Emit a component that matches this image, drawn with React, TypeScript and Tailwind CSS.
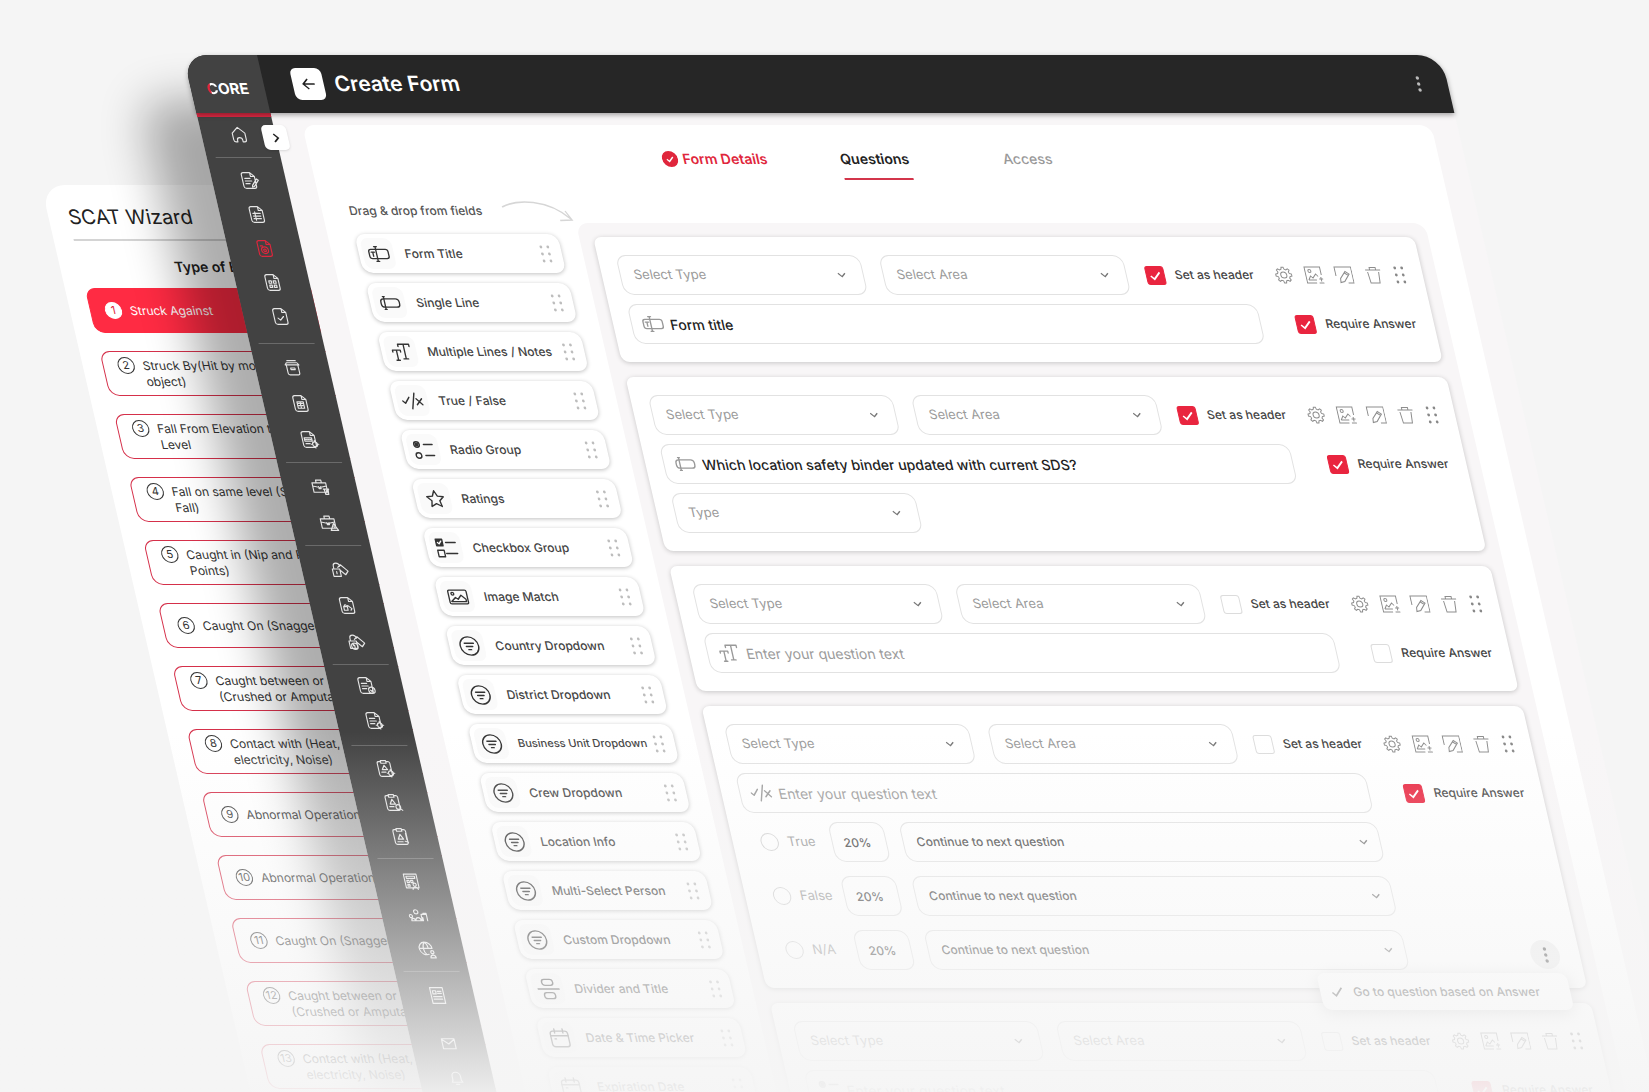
import { useState, type ReactNode } from "react"
import clsx from "clsx"

/* ---------- sidebar icons, 20x20 grid ---------- */

const DOC = "M5.5 2.5h6.3l3.7 3.7v9.3a2 2 0 0 1-2 2h-8a2 2 0 0 1-2-2v-11a2 2 0 0 1 2-2zM11.8 2.5v3.7h3.7"
const CLIP = "M7 3.5H5A1.5 1.5 0 0 0 3.5 5v11A1.5 1.5 0 0 0 5 17.5h9a1.5 1.5 0 0 0 1.5-1.5V5A1.5 1.5 0 0 0 14 3.5h-2M7 2.5h5V5H7z"
const CASE = "M3 6.5h13v9H3zM7 6.5V4h5v2.5M3 9.500l6.5 1.5 6.5-1.5M8.5 10v2h2v-2"
const LOCKTAG = "M3.5 9.5h7v7h-7zM5 9.5V7a3 3 0 0 1 6 0M9 8l3-2.5 6 6-3 3.500-4.500-4.500M7 12v2"
const BADGE = "M14.5 12.2a2.3 2.3 0 1 0 0 4.6 2.3 2.3 0 0 0 0-4.6zM14.5 11v1.2M14.5 16.8V18M11 14.5h1.2M16.8 14.5H18"
const LINES = "M6 8h5M6 10.5h6M6 13h4"

type NavGroup = { cell: string; pad: string; icons: { label: string; d: string; active?: boolean }[] }

const NAV_GROUPS: NavGroup[] = [
  {
    cell: "h-[34px]",
    pad: "pt-[5px] pb-[10px]",
    icons: [
      { label: "Edit form", d: DOC + LINES + "M12 14.5l5-6 1.5 1.2-5 6-2 .5z" },
      { label: "Form list", d: DOC + "M6 9h1M8.5 9H13M6 11.5h1M8.5 11.5H13M6 14h1M8.5 14H13M8 7.5v8" },
      { label: "Form builder", active: true, d: DOC + "M9.5 8.5a3.2 3.2 0 1 0 0 6.4 3.2 3.2 0 0 0 0-6.4zM9.5 10.5a1.2 1.2 0 1 0 0 2.4 1.2 1.2 0 0 0 0-2.4zM6 7.5h2" },
      { label: "Templates", d: DOC + "M6.3 8.5h2.4v2.2H6.3zM10.5 8.5h2.4v2.2h-2.4zM6.3 12.5h2.4v2.2H6.3zM10.5 12.5h2.4v2.2h-2.4z" },
      { label: "Completed", d: DOC + "M7 11.5l2 2 3.5-3.5" },
    ],
  },
  {
    cell: "h-9",
    pad: "py-[5px]",
    icons: [
      { label: "Archive", d: "M3.5 7.5h13M4.5 7.5v8A1.5 1.5 0 0 0 6 17h8a1.5 1.5 0 0 0 1.5-1.5v-8M5 5.5h10M6 3.5h8M3.5 7.5L5 5.5M16.5 7.5L15 5.5M8 10.5h4V12H8z" },
      { label: "Reports", d: DOC + "M6.5 8.5h6v6h-6zM9.5 8.5v6M7.5 10h1M7.5 12h1M10.5 10h1M10.5 12h1" },
      { label: "Report settings", d: DOC + "M5.5 8.5h7v3h-7zM6.5 10h1M8.5 10h1M10.5 10h1M6 14h4" + BADGE },
    ],
  },
  {
    cell: "h-9",
    pad: "py-[5px]",
    icons: [
      { label: "Removed jobs", d: CASE + "M12.5 12.5h5M13.2 12.5l.5 5h2.8l.5-5M15 14v2" },
      { label: "Job hazards", d: CASE + "M14.5 11l3.5 6.5h-7zM14.5 13.5v2" },
    ],
  },
  {
    cell: "h-9",
    pad: "py-[5px]",
    icons: [
      { label: "Lockout", d: LOCKTAG },
      { label: "Lockout forms", d: DOC + "M6 11h3.5v3.5H6zM6.8 11v-1a1.2 1.2 0 0 1 2 0M10 10l3.5 3-1.2 1.5" },
      { label: "Lockout settings", d: LOCKTAG + "M8 11.5a3 3 0 1 0 0 6 3 3 0 0 0 0-6zM8 13.5v2" },
    ],
  },
  {
    cell: "h-[35px]",
    pad: "pt-[3px] pb-[7px]",
    icons: [
      { label: "Approved", d: DOC + LINES + "M14.5 11.5a3 3 0 1 0 0 6 3 3 0 0 0 0-6zM13.3 14.5l1 1 1.5-1.8" },
      { label: "Policy settings", d: DOC + LINES + BADGE },
    ],
  },
  {
    cell: "h-[34px]",
    pad: "py-[5px]",
    icons: [
      { label: "Incident settings", d: CLIP + "M9.5 7l2.5 4H7zM6 13.5h4" + BADGE },
      { label: "Incident search", d: CLIP + "M9.5 7l2.5 4.5H7zM6 14h4M14 12a2.2 2.2 0 1 0 0 4.4 2.2 2.2 0 0 0 0-4.4zM15.8 15.8l1.7 1.7" },
      { label: "Incident edit", d: CLIP + "M9.5 8l2.5 4.5H7zM6 15h5M15 7v6M13 14.5l3 1" },
    ],
  },
  {
    cell: "h-[34px]",
    pad: "py-[5px]",
    icons: [
      { label: "Schedule", d: "M4 3h12v13H4zM6 5h8v2H6zM6 9h2v2H6zM9.5 9h2v2h-2zM6 13h2v1.5H6zM12.5 11.5a1.5 1.5 0 1 0 0 3 1.5 1.5 0 0 0 0-3zM10 17.5c.5-3 4.5-3 5 0" },
      { label: "Teams", d: "M7.5 4.5a2 2 0 1 0 0 4 2 2 0 0 0 0-4zM3.5 10.5a1.5 1.5 0 1 0 0 .1M2 15c0-3 3.5-3 3.5 0zM6 15c0-4 5-4 5 0zM12 15V9h5v6M14 8h3v3M13 15v-3" },
      { label: "Global users", d: "M9 3a6 6 0 1 0 2 11.6M3 9h12M9 3c-3 3-3 9 0 12M9 3c2 2 2.5 4 2.5 6M15 9a6 6 0 0 0-6-6M14.5 11a1.5 1.5 0 1 0 0 3 1.5 1.5 0 0 0 0-3zM12 18c.3-3.5 4.7-3.5 5 0z" },
    ],
  },
]

const HOME = "M4 8.7 10 3.2l6 5.5V15a2 2 0 0 1-2 2h-1.5v-1.5a2.5 2.5 0 0 0-5 0V17H6a2 2 0 0 1-2-2z"
const NEWS = "M4 2.5h12v15H4zM6 5.5h3v3H6zM10.5 6H14M10.5 8H14M6 11h8M6 13.5h8"
const MAIL = "M4 5.5h12V15H4zM4 6l6 4.5L16 6"
const BELL = "M5 14.5h10l-1-2V9a4 4 0 0 0-8 0v3.5zM8.5 16.5h3"

function NavIcon({ d, label, active, cell }: { d: string; label: string; active?: boolean; cell: string }) {
  return (
    <a href="#" aria-label={label} className={clsx("flex items-center justify-center", cell, active ? "text-[#e0263c]" : "text-[#e6e6e6]")}>
      <svg viewBox="0 0 20 20" className="size-[21px]" fill="none" stroke="currentColor" strokeWidth="1.1" strokeLinejoin="round" strokeLinecap="round">
        <path d={d} />
      </svg>
    </a>
  )
}

/* ---------- field icons, 24x24 grid ---------- */

const FIELD_ICONS: Record<string, ReactNode> = {
  title: (
    <>
      <rect x="1.5" y="7" width="21" height="10" rx="2.5" />
      <path d="M9.5 4v16M8 4h3M8 20h3M4 10h3.5M5.7 10v4.5" />
    </>
  ),
  line: (
    <>
      <rect x="2" y="7.5" width="20" height="9" rx="3.5" />
      <path d="M6 5v14M5 5h2M5 19h2" />
    </>
  ),
  text: <path d="M9.5 6V3.5h12V6M15.5 3.5v16M13 19.5h5M2.5 12v-2H11v2M6.800 10v11M5 21h3.6" />,
  bool: <path d="M1 12l2.500 2.500L8.500 8M15 3.5l-5 17M16 9.500l6 6.5M22 9.5L16 16" />,
  radio: (
    <>
      <circle cx="5" cy="6" r="3" />
      <circle cx="5" cy="6" r="1.5" fill="currentColor" />
      <circle cx="5" cy="18" r="3" />
      <path d="M12.5 6H22M12.5 18H22" />
    </>
  ),
  star: <path d="M12 3l2.7 5.9 6.3.7-4.7 4.3 1.3 6.3L12 17l-5.6 3.2 1.3-6.3L3 9.6l6.300-.7z" />,
  check: (
    <>
      <rect x="1.5" y="2.5" width="7" height="7" fill="currentColor" />
      <path d="M3.2 6l1.4 1.5L7 4.500" stroke="#fff" />
      <rect x="1.5" y="14.5" width="7" height="7" />
      <path d="M12 6h10.500M10.5 18h12" />
    </>
  ),
  image: (
    <>
      <rect x="2" y="4.5" width="20" height="15" rx="1.5" />
      <circle cx="6.5" cy="8.5" r="1.5" />
      <path d="M4 17l5-4.5 2.5 2 4-4.5 4.5 4.5V17z" />
    </>
  ),
  dropdown: (
    <>
      <circle cx="12" cy="12" r="10" />
      <path d="M7 9h10M8.5 12.5h7M10.5 16h3" />
    </>
  ),
  divider: (
    <>
      <rect x="6" y="1.5" width="12" height="6.5" rx="3" />
      <path d="M0 12h24" />
      <rect x="6" y="16" width="12" height="6.5" rx="3" />
    </>
  ),
  calendar: (
    <>
      <rect x="2.5" y="4.5" width="19" height="17" rx="3" />
      <path d="M2.5 9.5h19M7.5 2v4.5M16.5 2v4.5M6.5 13H8" />
    </>
  ),
}

function FieldIcon({ name, className }: { name: string; className?: string }) {
  return (
    <svg viewBox="0 0 24 24" className={clsx("size-[22px] shrink-0", className)} fill="none" stroke="currentColor" strokeWidth="1.5" strokeLinecap="round" strokeLinejoin="round">
      {FIELD_ICONS[name]}
    </svg>
  )
}

const FIELDS = [
  { icon: "title", label: "Form Title" },
  { icon: "line", label: "Single Line" },
  { icon: "text", label: "Multiple Lines / Notes" },
  { icon: "bool", label: "True / False" },
  { icon: "radio", label: "Radio Group" },
  { icon: "star", label: "Ratings" },
  { icon: "check", label: "Checkbox Group" },
  { icon: "image", label: "Image Match" },
  { icon: "dropdown", label: "Country Dropdown" },
  { icon: "dropdown", label: "District Dropdown" },
  { icon: "dropdown", label: "Business Unit Dropdown", small: true },
  { icon: "dropdown", label: "Crew Dropdown" },
  { icon: "dropdown", label: "Location Info" },
  { icon: "dropdown", label: "Multi-Select Person" },
  { icon: "dropdown", label: "Custom Dropdown" },
  { icon: "divider", label: "Divider and Title" },
  { icon: "calendar", label: "Date & Time Picker" },
  { icon: "calendar", label: "Expiration Date" },
]

const EVENTS = [
  "Struck Against",
  "Struck By(Hit by moving\nobject)",
  "Fall From Elevation to Lower\nLevel",
  "Fall on same level (Slip and\nFall)",
  "Caught in (Nip and Pinch\nPoints)",
  "Caught On (Snagged)",
  "Caught between or under\n(Crushed or Amputated)",
  "Contact with (Heat, Cold,\nelectricity, Noise)",
  "Abnormal Operation",
  "Abnormal Operation",
  "Caught On (Snagged)",
  "Caught between or under\n(Crushed or Amputated)",
  "Contact with (Heat, Cold,\nelectricity, Noise)",
]

function DragDots({ className }: { className?: string }) {
  return (
    <svg viewBox="0 0 10 18" className={clsx("h-[18px] w-[10px] shrink-0", className)} fill="currentColor">
      {[2, 9, 16].map((y) => (
        <g key={y}>
          <circle cx="1.5" cy={y} r="1.4" />
          <circle cx="8.5" cy={y} r="1.4" />
        </g>
      ))}
    </svg>
  )
}

function MoreDots() {
  return (
    <svg viewBox="0 0 4 18" className="h-[18px] w-1" fill="currentColor">
      <circle cx="2" cy="3" r="1.7" />
      <circle cx="2" cy="9" r="1.7" />
      <circle cx="2" cy="15" r="1.7" />
    </svg>
  )
}

function Select({ label, className, dark }: { label: string; className?: string; dark?: boolean }) {
  return (
    <div className={clsx("relative", className)}>
      <select
        aria-label={label}
        className={clsx(
          "block h-10 w-full appearance-none rounded-[10px] border border-[#e2e2e2] bg-transparent px-[13px]",
          dark ? "text-xs font-medium text-[#444]" : "text-[13px] text-[#9b9b9b]"
        )}
      >
        <option>{label}</option>
      </select>
      <svg
        viewBox="0 0 10 10"
        className={clsx("pointer-events-none absolute top-[15px] size-[10px] text-[#777]", dark ? "right-3" : "right-[17px]")}
        fill="none"
        stroke="currentColor"
        strokeWidth="1.3"
      >
        <path d="M1.5 3.2L5 6.7l3.5-3.5" />
      </svg>
    </div>
  )
}

function Checkbox({ label, checked }: { label: string; checked?: boolean }) {
  return (
    <label className="flex items-center gap-[10px] text-xs font-medium whitespace-nowrap text-[#444]">
      <span className="grid size-[19px]">
        <input
          type="checkbox"
          defaultChecked={checked}
          className="peer col-start-1 row-start-1 size-[19px] appearance-none rounded-[3px] border border-[#dcdcdc] checked:border-[#e9253f] checked:bg-[#e9253f]"
        />
        <svg viewBox="0 0 18 18" className="pointer-events-none invisible col-start-1 row-start-1 size-[19px] peer-checked:visible" fill="none" stroke="#fff" strokeWidth="1.6">
          <path d="M4.5 9.5l3 3 6-6.5" />
        </svg>
      </span>
      {label}
    </label>
  )
}

const TOOLS = [
  {
    label: "Settings",
    d: "M8 1.2h2l.5 2 1.6.7 1.8-1.1 1.4 1.4-1.1 1.8.7 1.6 2 .5v2l-2 .5-.7 1.5 1.1 1.8-1.4 1.4-1.8-1.1-1.6.7-.5 2H8l-.5-2-1.6-.7-1.8 1.1-1.4-1.4 1.1-1.8-.7-1.5-2-.5v-2l2-.5.7-1.6-1.1-1.8 1.4-1.4 1.8 1.1 1.6-.7zM9 6a3 3 0 1 0 0 6 3 3 0 0 0 0-6z",
  },
  { label: "Add image", d: "M16.5 9V1H1v16h9.5M13 17h5M15.5 11v4.5M13.5 13h4M3 14l2.5-4 2 2L11 8l2 2.5M3 14h8M5.5 3.5a1.500 1.500 0 1 0 0 3 1.500 1.500 0 0 0 0-3z" },
  { label: "Edit", d: "M1 5V1h16.500v16H12M1 5v5M4.500 16.500l.5-4L11 5.500l3.500 2.500L8.500 15.500zM10 7l3.500 2.500" },
  { label: "Delete", d: "M1.5 4h15M6 4V1.5h6V4M3.5 6l1 11h9l1-11" },
]

function QuestionRow({ setHeader }: { setHeader?: boolean }) {
  return (
    <div className="flex items-center">
      <Select label="Select Type" className="w-[244px]" />
      <Select label="Select Area" className="ml-[19px] w-[244px]" />
      <div className="ml-[19px]">
        <Checkbox label="Set as header" checked={setHeader} />
      </div>
      <div className="ml-auto flex items-center gap-3 text-[#8d8d8d]">
        {TOOLS.map((t) => (
          <button key={t.label} aria-label={t.label}>
            <svg viewBox="0 0 18 18" className="size-[18px]" fill="none" stroke="currentColor" strokeWidth="1">
              <path d={t.d} />
            </svg>
          </button>
        ))}
        <button aria-label="Move question" className="text-[#888]">
          <DragDots />
        </button>
      </div>
    </div>
  )
}

function QuestionInput({ icon, value, required }: { icon: string; value?: string; required?: boolean }) {
  return (
    <div className="flex items-center justify-between">
      <label className="flex h-10 w-[630px] items-center gap-[6px] rounded-[10px] border border-[#e2e2e2] pl-[10px]">
        <FieldIcon name={icon} className="text-[#999]" />
        <input
          type="text"
          aria-label="Question"
          defaultValue={value}
          placeholder="Enter your question text"
          className="h-full flex-1 bg-transparent text-sm font-medium text-[#222] outline-none placeholder:font-normal placeholder:text-[#9b9b9b]"
        />
      </label>
      <Checkbox label="Require Answer" checked={required} />
    </div>
  )
}

function Question({ children }: { children: ReactNode }) {
  return (
    <section className="relative flex flex-col gap-[9px] rounded-lg bg-white px-[18px] py-[18px] shadow-[0_1px_5px_rgba(0,0,0,0.2)]">
      {children}
    </section>
  )
}

function Sidebar({ open, onToggle }: { open: boolean; onToggle: () => void }) {
  return (
    <nav className="relative w-[74px] shrink-0 border-t-4 border-[#dc2a43] bg-[#424242] px-[9px]">
      <button
        onClick={onToggle}
        aria-expanded={open}
        aria-label="Expand menu"
        className="absolute top-2 -right-3 z-10 flex size-[25px] items-center justify-center rounded-[5px] bg-white text-[#222] shadow-sm"
      >
        <svg viewBox="0 0 10 10" className="size-[10px]" fill="none" stroke="currentColor" strokeWidth="1.7">
          <path d="M3 1l4 4-4 4" />
        </svg>
      </button>
      <div className="border-b border-[#6a6a6a] pb-[6px]">
        <NavIcon label="Home" d={HOME} cell="h-[34px]" />
      </div>
      {NAV_GROUPS.map((group, i) => (
        <div key={i} className={clsx("border-b border-[#6a6a6a]", group.pad)}>
          {group.icons.map((icon) => (
            <NavIcon key={icon.label} {...icon} cell={group.cell} />
          ))}
        </div>
      ))}
      <div className="pt-[5px]">
        <NavIcon label="News" d={NEWS} cell="h-9" />
        <NavIcon label="Messages" d={MAIL} cell="mt-3 h-9" />
        <NavIcon label="Alerts" d={BELL} cell="h-8" />
      </div>
    </nav>
  )
}

function FieldList() {
  return (
    <aside className="w-[203px] shrink-0 pt-[21px]">
      <p className="text-xs leading-5 font-medium whitespace-nowrap text-[#555]">Drag &amp; drop from fields</p>
      <ul className="mt-[13px] flex flex-col gap-[10px]">
        {FIELDS.map((f) => (
          <li key={f.label}>
            <button className="flex h-[39px] w-full items-center rounded-[10px] bg-white pr-[11px] pl-1 text-left shadow-[0_1px_4px_rgba(0,0,0,0.25)]">
              <span className="flex size-[31px] shrink-0 items-center justify-center rounded-lg bg-[#fafafa] text-[#333]">
                <FieldIcon name={f.icon} />
              </span>
              <span className={clsx("ml-[11px] flex-1 font-medium whitespace-nowrap text-[#444]", f.small ? "text-[11px]" : "text-xs")}>{f.label}</span>
              <DragDots className="text-[#bdbdbd]" />
            </button>
          </li>
        ))}
      </ul>
    </aside>
  )
}

function Tabs() {
  return (
    <div className="grid grid-cols-[1fr_auto_1fr] pt-6 text-sm leading-5 font-semibold">
      <button className="flex items-start justify-self-end pr-[73px] text-[#e0263c]">
        <svg viewBox="0 0 16 16" className="mt-[2px] mr-[5px] size-4">
          <circle cx="8" cy="8" r="8" fill="#e0263c" />
          <path d="M4.8 8.3L7 10.500l4.200-4.500" fill="none" stroke="#fff" strokeWidth="1.3" />
        </svg>
        Form Details
      </button>
      <button className="border-b-2 border-[#d3354b] pb-[9px] text-[#222]">Questions</button>
      <button className="self-start justify-self-start pl-[94px] font-medium text-[#999]">Access</button>
    </div>
  )
}

function FormBuilder() {
  const answers = ["True", "False", "N/A"]
  return (
    <div className="mt-[43px] min-w-0 flex-1 rounded-t-xl bg-[#f8f6f7] px-[14px] pt-[14px]">
      <div className="flex flex-col gap-[15px]">
        <Question>
          <QuestionRow setHeader />
          <QuestionInput icon="title" value="Form title" required />
        </Question>
        <Question>
          <QuestionRow setHeader />
          <QuestionInput icon="line" value="Which location safety binder updated with current SDS?" required />
          <Select label="Type" className="w-[244px]" />
        </Question>
        <Question>
          <QuestionRow />
          <QuestionInput icon="text" />
        </Question>
        <Question>
          <QuestionRow />
          <QuestionInput icon="bool" required />
          <div className="flex w-[630px] flex-col gap-[14px]">
            {answers.map((a) => (
              <div key={a} className="flex items-center pl-[10px]">
                <label className="flex w-[71px] items-center gap-[9px] text-[13px] text-[#999]">
                  <input type="radio" name="answer" className="size-[18px] appearance-none rounded-full border border-[#d0d0d0] checked:bg-[#e9253f]" />
                  {a}
                </label>
                <input
                  aria-label={`${a} weight`}
                  defaultValue="20%"
                  className="h-10 w-[55px] rounded-[10px] border border-[#e2e2e2] bg-transparent px-[11px] text-xs font-medium text-[#444]"
                />
                <Select label="Continue to next question" dark className="ml-4 flex-1" />
              </div>
            ))}
          </div>
          <button aria-label="More options" className="absolute right-5 bottom-[19px] flex size-[29px] items-center justify-center rounded-full bg-[#ededed] text-[#555]">
            <MoreDots />
          </button>
          <div className="absolute right-[18px] -bottom-[22px] z-10 flex h-[37px] w-[250px] items-center gap-[9px] rounded-lg bg-white pl-[10px] text-xs font-medium whitespace-nowrap text-[#555] shadow-[0_4px_16px_rgba(0,0,0,0.18)]">
            <svg viewBox="0 0 14 14" className="size-[14px]" fill="none" stroke="currentColor" strokeWidth="1.6">
              <path d="M2 7.5l3.2 3.3L12 2.8" />
            </svg>
            Go to question based on Answer
          </div>
        </Question>
        <Question>
          <QuestionRow />
          <QuestionInput icon="radio" required />
        </Question>
      </div>
    </div>
  )
}

function ScatWizard() {
  const [selected, setSelected] = useState(0)
  return (
    <section className="col-start-1 row-start-1 mt-[185px] ml-[41px] w-[322px] origin-top-left skew-x-[13deg] self-start rounded-3xl bg-white px-5 pb-10">
      <h2 className="pt-[18px] text-xl leading-7 text-[#222]">SCAT Wizard</h2>
      <hr className="mt-2 border-t-2 border-[#d4d4d4]" />
      <h3 className="mt-4 text-center text-sm leading-5 font-semibold text-[#222]">Type of Event</h3>
      <ol className="mt-[11px] flex flex-col gap-[18px]">
        {EVENTS.map((text, i) => (
          <li key={i}>
            <button
              onClick={() => setSelected(i)}
              className={clsx(
                "flex h-[45px] w-full items-center gap-2 rounded-[10px] border pl-[14px] text-left text-xs leading-4",
                i === selected ? "border-[#ff2b43] bg-[#ff2b43] text-white" : "border-[#d5304a] text-[#333]"
              )}
            >
              <span
                className={clsx(
                  "flex size-[17px] shrink-0 items-center justify-center rounded-full border text-[11px] leading-none",
                  text.includes("\n") && "-mt-4",
                  i === selected ? "border-white bg-white text-[#e0263c]" : "border-[#333]"
                )}
              >
                {i + 1}
              </span>
              <span className="whitespace-pre">{text}</span>
            </button>
          </li>
        ))}
      </ol>
    </section>
  )
}

export default function App() {
  const [open, setOpen] = useState(false)

  return (
    <main className="relative grid h-screen grid-cols-1 overflow-hidden bg-[#f5f5f5] font-['Inter',sans-serif]">
      <ScatWizard />

      <div className="z-10 col-start-1 row-start-1 mt-[55px] mr-[208px] ml-[183px] min-w-0 origin-top-left skew-x-[13deg] self-start rounded-t-3xl shadow-[-54px_45px_45px_rgba(0,0,0,0.32)]">
        <header className="relative z-10 flex h-[58px] overflow-hidden rounded-t-3xl bg-[#262626] text-white shadow-[0_2px_5px_rgba(0,0,0,0.35)]">
          <div className="flex w-[74px] items-center justify-center bg-[#424242] pt-[10px] text-[15px] font-bold">
            <span className="bg-linear-to-r from-[#e0263c] from-40% to-white to-40% bg-clip-text text-transparent">C</span>ORE
          </div>
          <button aria-label="Back" className="ml-[29px] flex h-8 w-[31px] items-center justify-center self-center rounded-md bg-white text-[#222]">
            <svg viewBox="0 0 16 16" className="size-4" fill="none" stroke="currentColor" strokeWidth="1.5">
              <path d="M14 8H2.5M7.5 3l-5 5 5 5" />
            </svg>
          </button>
          <h1 className="ml-[11px] self-center text-[21px] font-semibold">Create Form</h1>
          <button aria-label="More" className="mr-[27px] ml-auto text-[#bbb]">
            <MoreDots />
          </button>
        </header>

        <div className="flex">
          <Sidebar open={open} onToggle={() => setOpen(!open)} />
          <div className="min-w-0 flex-1 bg-[#f8f6f7] pt-3 pr-[26px] pl-[29px]">
            <div className="min-h-full rounded-t-xl bg-white">
              <Tabs />
              <div className="relative flex gap-[21px] pr-[29px] pl-[27px]">
                <FieldList />
                <svg viewBox="0 0 80 24" className="absolute top-5 left-[172px] h-6 w-20" fill="none" stroke="#d6d6d6" strokeWidth="1.5">
                  <path d="M9 7C26-1 56-1 75 19M64 20.500l12-.5-5-9" />
                </svg>
                <FormBuilder />
              </div>
            </div>
          </div>
        </div>
      </div>

      <div className="pointer-events-none absolute inset-x-0 bottom-0 z-20 h-[360px] bg-linear-to-b from-[#f5f5f5]/0 to-[#f5f5f5]/95" />
    </main>
  )
}
